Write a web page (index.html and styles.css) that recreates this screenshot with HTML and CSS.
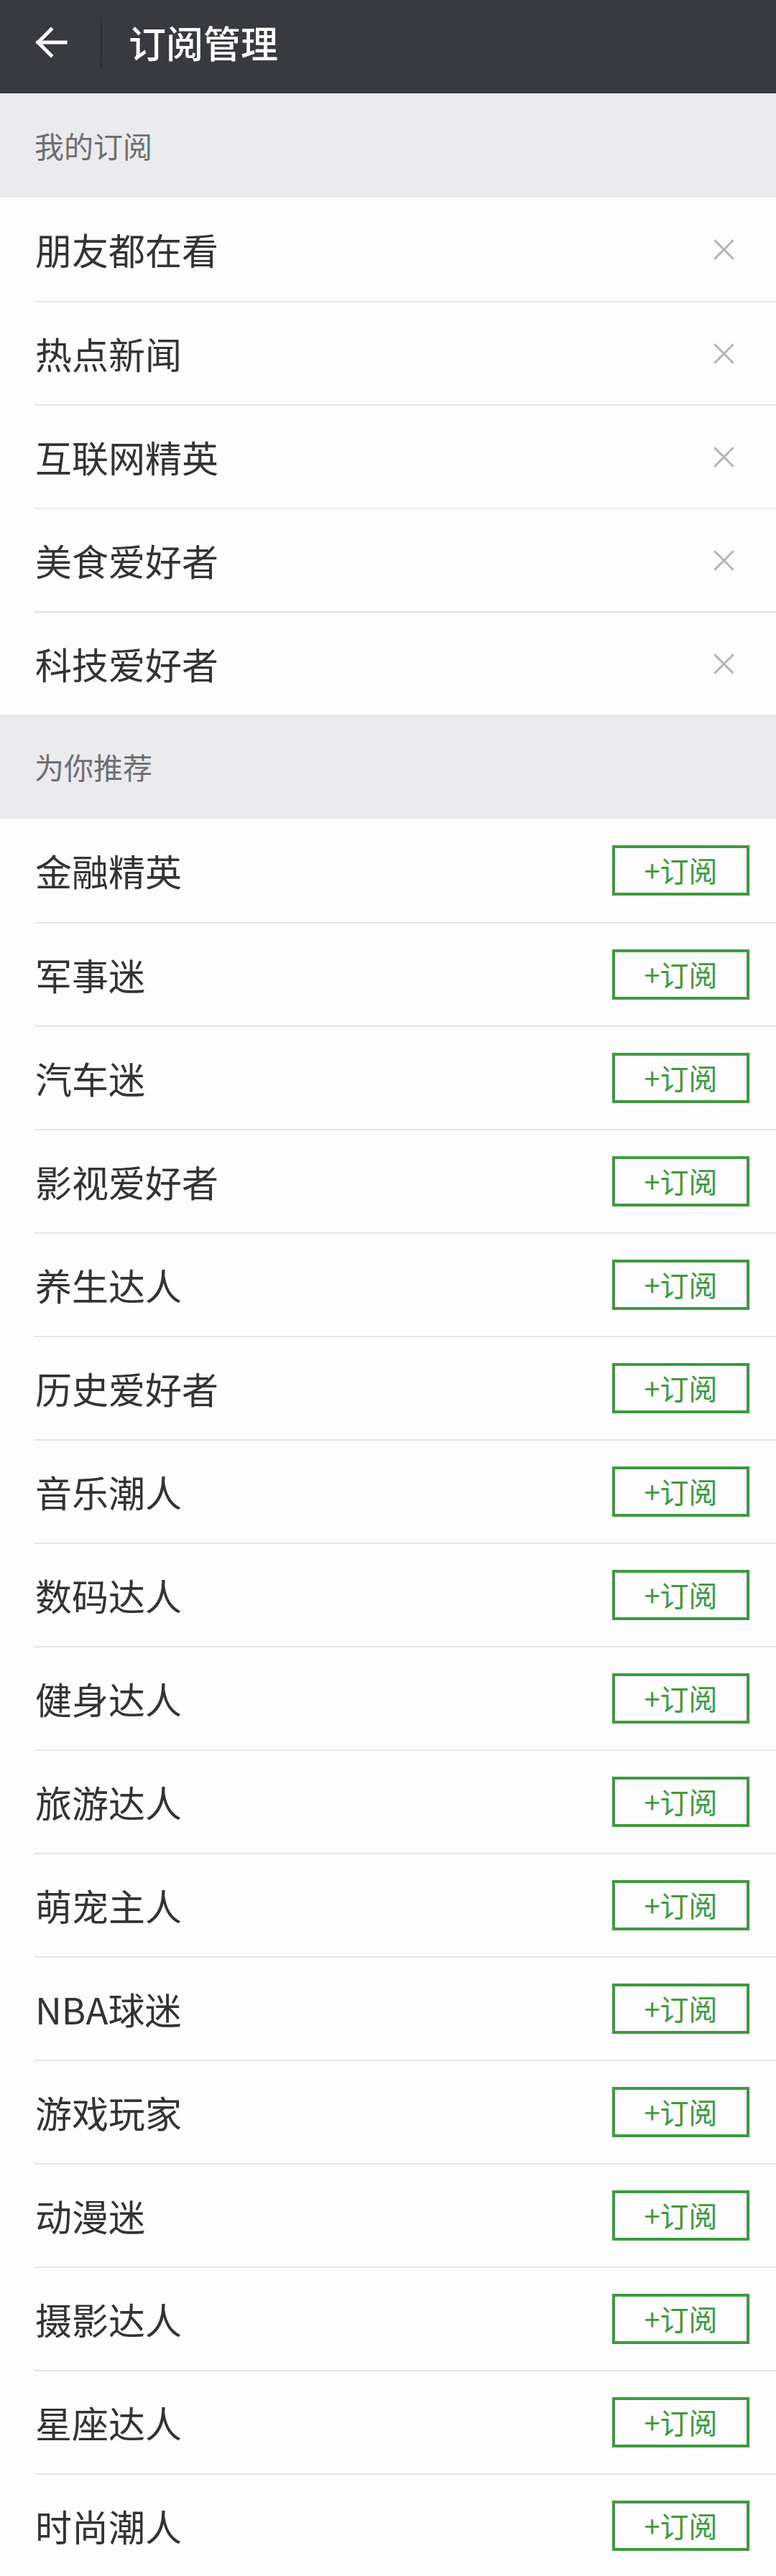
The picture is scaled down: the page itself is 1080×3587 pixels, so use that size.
FILE: index.html
```html
<!DOCTYPE html>
<html lang="zh-CN">
<head>
<meta charset="utf-8">
<title>订阅管理</title>
<link rel="stylesheet" href="styles.css">
</head>
<body>
<header class="topbar">
  <span class="back">
    <svg width="48" height="48" viewBox="0 0 48 48"><path d="M44 24H6M24 6L6 24l18 18" fill="none" stroke="#fff" stroke-width="5" stroke-linecap="square"/></svg>
  </span>
  <span class="sep"></span>
  <h1 class="title">订阅管理</h1>
</header>

<div class="section">我的订阅</div>
<ul class="list">
  <li class="row"><span class="name">朋友都在看</span><span class="close"></span></li>
  <li class="row"><span class="name">热点新闻</span><span class="close"></span></li>
  <li class="row"><span class="name">互联网精英</span><span class="close"></span></li>
  <li class="row"><span class="name">美食爱好者</span><span class="close"></span></li>
  <li class="row"><span class="name">科技爱好者</span><span class="close"></span></li>
</ul>

<div class="section">为你推荐</div>
<ul class="list">
  <li class="row"><span class="name">金融精英</span><span class="sub">+订阅</span></li>
  <li class="row"><span class="name">军事迷</span><span class="sub">+订阅</span></li>
  <li class="row"><span class="name">汽车迷</span><span class="sub">+订阅</span></li>
  <li class="row"><span class="name">影视爱好者</span><span class="sub">+订阅</span></li>
  <li class="row"><span class="name">养生达人</span><span class="sub">+订阅</span></li>
  <li class="row"><span class="name">历史爱好者</span><span class="sub">+订阅</span></li>
  <li class="row"><span class="name">音乐潮人</span><span class="sub">+订阅</span></li>
  <li class="row"><span class="name">数码达人</span><span class="sub">+订阅</span></li>
  <li class="row"><span class="name">健身达人</span><span class="sub">+订阅</span></li>
  <li class="row"><span class="name">旅游达人</span><span class="sub">+订阅</span></li>
  <li class="row"><span class="name">萌宠主人</span><span class="sub">+订阅</span></li>
  <li class="row"><span class="name">NBA球迷</span><span class="sub">+订阅</span></li>
  <li class="row"><span class="name">游戏玩家</span><span class="sub">+订阅</span></li>
  <li class="row"><span class="name">动漫迷</span><span class="sub">+订阅</span></li>
  <li class="row"><span class="name">摄影达人</span><span class="sub">+订阅</span></li>
  <li class="row"><span class="name">星座达人</span><span class="sub">+订阅</span></li>
  <li class="row"><span class="name">时尚潮人</span><span class="sub">+订阅</span></li>
</ul>
</body>
</html>
```

FILE: styles.css
```css
* { box-sizing: border-box; }
html, body {
  margin: 0;
  padding: 0;
  background: #fdfdfd;
  font-family: "Noto Sans CJK SC", "Noto Sans", sans-serif;
}
.topbar {
  height: 130px;
  background: #393a3f;
  display: flex;
  align-items: center;
  padding: 0 0 12px 47px;
}
.back {
  width: 48px;
  height: 48px;
  display: flex;
}
.sep {
  width: 2px;
  height: 70px;
  background: #2c2d31;
  margin-left: 45px;
}
.title {
  margin: 0 0 0 37px;
  color: #fff;
  font-size: 52px;
  font-weight: 500;
  line-height: 1;
}
.section {
  height: 145px;
  background: #ebebed;
  color: #6e6e72;
  font-size: 41px;
  display: flex;
  align-items: center;
  padding-left: 48px;
  padding-bottom: 2px;
}
.list {
  list-style: none;
  margin: 0;
  padding: 0;
  background: #fdfdfd;
}
.row {
  height: 144px;
  margin-left: 48px;
  padding-right: 37px;
  display: flex;
  align-items: center;
  justify-content: space-between;
  border-top: 2px solid #e6e6e8;
}
.row:first-child { border-top: none; }
.name {
  color: #333;
  font-size: 51px;
  line-height: 1;
  margin-left: 1px;
}
.close {
  position: relative;
  width: 27px;
  height: 27px;
  margin-right: 22px;
}
.close::before, .close::after {
  content: "";
  position: absolute;
  left: -5px;
  top: 12px;
  width: 37px;
  height: 3px;
  background: #b4b4b4;
  transform: rotate(45deg);
}
.close::after { transform: rotate(-45deg); }
.sub {
  width: 191px;
  height: 70px;
  border: 4px solid #3e9a3e;
  color: #3e9a3e;
  font-size: 40px;
  line-height: 1;
  display: flex;
  align-items: center;
  justify-content: center;
  padding-bottom: 2px;
}
```
